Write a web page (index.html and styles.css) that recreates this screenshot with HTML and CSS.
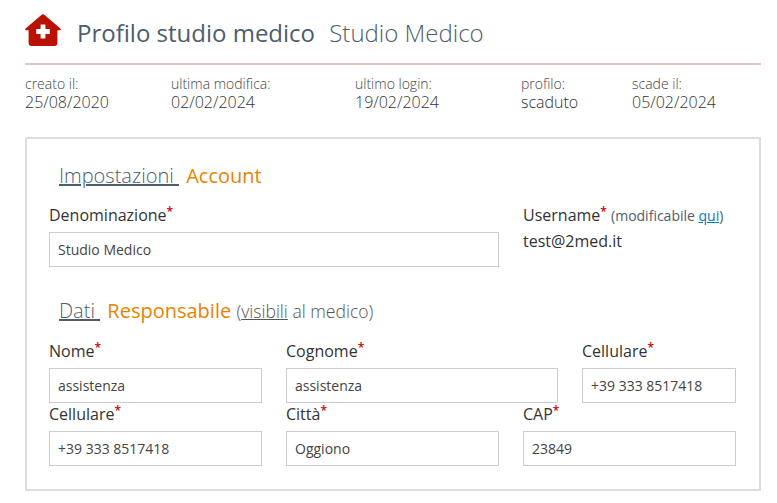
FILE: index.html
```html
<!DOCTYPE html>
<html lang="it">
<head>
    <meta charset="UTF-8">
    <meta name="viewport" content="width=device-width, initial-scale=1.0">
    <title>Profilo studio medico</title>
    <link rel="stylesheet" href="styles.css">
</head>
<body>

    <header class="testata">
        <svg class="icona-casa" viewBox="0 0 36 32" width="36" height="32">
            <path fill="#bb1100" fill-rule="evenodd" d="M18 0.3 Q18.8 0.3 19.6 1 L35.4 14.6 Q36.4 15.8 35 16.3 L32.4 16.3 L32.4 29 Q32.4 32 29.4 32 L6.6 32 Q3.6 32 3.6 29 L3.6 16.3 L1 16.3 Q-0.4 15.8 0.6 14.6 L16.4 1 Q17.2 0.3 18 0.3 Z M15.6 10.5 L15.6 15 L11.2 15 L11.2 20 L15.6 20 L15.6 24.5 L20.4 24.5 L20.4 20 L24.8 20 L24.8 15 L20.4 15 L20.4 10.5 Z"/>
        </svg>
        <h1 class="titolo">Profilo studio medico <small>Studio Medico</small></h1>
    </header>

    <div class="riepilogo">
        <div class="dato dato-creato">creato il:<span>25/08/2020</span></div>
        <div class="dato dato-modifica">ultima modifica:<span>02/02/2024</span></div>
        <div class="dato dato-login">ultimo login:<span>19/02/2024</span></div>
        <div class="dato dato-profilo">profilo:<span>scaduto</span></div>
        <div class="dato">scade il:<span>05/02/2024</span></div>
    </div>

    <form class="pannello">
        <h2 class="sezione"><u>Impostazioni&nbsp;</u> <em>Account</em></h2>
        <div class="riga riga-account">
            <div class="campo largo">
                <label>Denominazione<i>*</i></label>
                <input type="text" value="Studio Medico">
            </div>
            <div class="campo">
                <label>Username<i>*</i> <span class="nota">(modificabile <a href="#">qui</a>)</span></label>
                <div class="valore">test@2med.it</div>
            </div>
        </div>

        <h2 class="sezione sezione-dati"><u>Dati&nbsp;</u> <em>Responsabile</em> <span class="nota-sezione">(<u>visibili</u> al medico)</span></h2>
        <div class="riga riga-nome">
            <div class="campo">
                <label>Nome<i>*</i></label>
                <input type="text" value="assistenza">
            </div>
            <div class="campo cognome">
                <label>Cognome<i>*</i></label>
                <input type="text" value="assistenza">
            </div>
            <div class="campo stretto">
                <label>Cellulare<i>*</i></label>
                <input type="text" value="+39 333 8517418">
            </div>
        </div>
        <div class="riga">
            <div class="campo">
                <label>Cellulare<i>*</i></label>
                <input type="text" value="+39 333 8517418">
            </div>
            <div class="campo">
                <label>Città<i>*</i></label>
                <input type="text" value="Oggiono">
            </div>
            <div class="campo">
                <label>CAP<i>*</i></label>
                <input type="text" value="23849">
            </div>
        </div>
    </form>

</body>
</html>
```

FILE: styles.css
```css
body {
    font-family: "Open Sans", sans-serif;
    margin: 0;
    padding: 0 16px 0 25px;
    background-color: #fff;
    color: #333;
    overflow: hidden;
}
.testata {
    display: flex;
    align-items: center;
    height: 63px;
    border-bottom: 2px solid #e8c2bc;
    box-sizing: content-box;
}
.icona-casa {
    margin: -3px 16px 0 0;
}
.titolo {
    margin: 0;
    font-size: 24px;
    font-weight: 400;
    color: #4d5d6b;
    line-height: 33px;
    margin-top: 2px;
    white-space: nowrap;
}
.titolo small {
    font-size: 24px;
    font-weight: 300;
    margin-left: 8px;
    color: #4d5d6b;
}
.riepilogo {
    display: flex;
    margin-top: 10px;
    font-size: 14px;
    font-weight: 300;
    line-height: 18px;
    color: #444;
}
.dato span {
    display: block;
    font-size: 16px;
    line-height: 19px;
    color: #333;
}
.dato-creato { width: 146px; }
.dato-modifica { width: 184px; }
.dato-login { width: 166px; }
.dato-profilo { width: 111px; }
.pannello {
    margin-top: 25px;
    width: 736px;
    height: 354px;
    box-sizing: border-box;
    border: 2px solid #ddd;
    padding: 23px 22px 0;
}
.sezione {
    margin: 0 0 0 10px;
    font-size: 20px;
    font-weight: 300;
    line-height: 28px;
    color: #4d5d6b;
}
.sezione em {
    font-style: normal;
    font-weight: 400;
    color: #e98300;
    margin-left: 2px;
}
.sezione-dati {
    margin-top: 30px;
}
.nota-sezione {
    font-size: 17.6px;
    color: #555;
}
.riga {
    display: flex;
    gap: 24px;
}
.riga-account {
    margin-top: 14px;
}
.riga-nome {
    margin-top: 15px;
}
.campo {
    width: 213px;
}
.campo.largo { width: 450px; }
.campo.cognome { width: 272px; }
.campo.stretto { width: 154px; }
label {
    display: block;
    font-size: 16px;
    line-height: 22px;
    height: 28px;
    color: #333;
    white-space: nowrap;
}
label i {
    font-style: normal;
    font-weight: 600;
    color: #cc0000;
    font-size: 12px;
    line-height: 0;
    position: relative;
    top: -5px;
}
.nota {
    font-size: 14px;
    font-weight: 400;
    color: #4d5d6b;
}
.nota a {
    color: #0b79bd;
}
.valore {
    font-size: 16px;
    line-height: 22px;
    margin-top: -2px;
}
input {
    display: block;
    box-sizing: border-box;
    width: 100%;
    height: 35px;
    padding: 0 8px;
    border: 1px solid #ccc;
    font-family: "Open Sans", sans-serif;
    font-size: 14px;
    color: #444;
    background: #fff;
}
```
